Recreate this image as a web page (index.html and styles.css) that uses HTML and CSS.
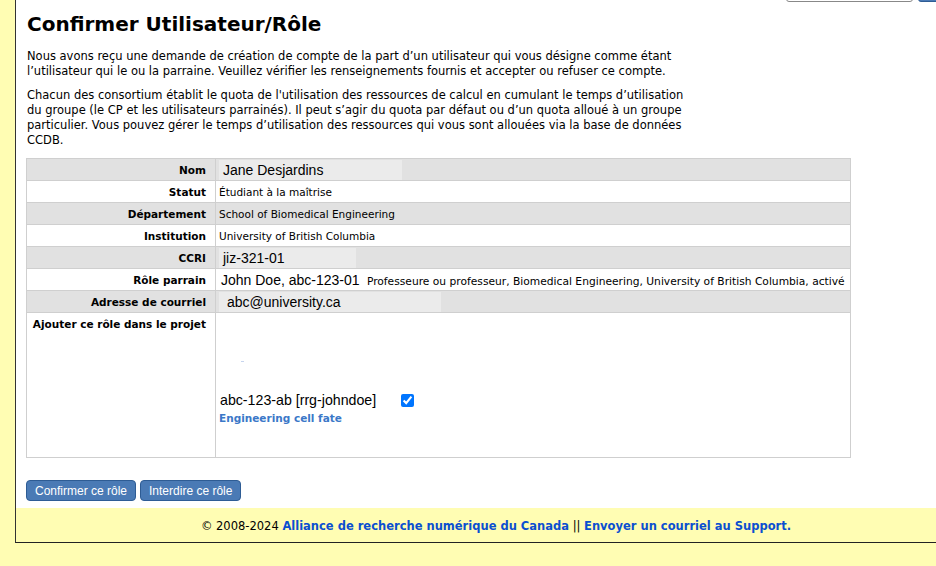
FILE: index.html
```html
<!DOCTYPE html>
<html lang="fr">
<head>
  <meta charset="UTF-8" />
  <meta name="viewport" content="width=device-width, initial-scale=1.0" />
  <title>Confirmer Utilisateur/Rôle</title>
  <link rel="stylesheet" href="styles.css">
</head>
<body>
  <div class="page">
    <div class="topbar">
      <input class="search" type="text" />
      <button class="search-go"></button>
    </div>

    <div class="content">
      <h1>Confirmer Utilisateur/Rôle</h1>
      <p>Nous avons reçu une demande de création de compte de la part d’un utilisateur qui vous désigne comme étant l’utilisateur qui le ou la parraine. Veuillez vérifier les renseignements fournis et accepter ou refuser ce compte.</p>
      <p>Chacun des consortium établit le quota de l'utilisation des ressources de calcul en cumulant le temps d’utilisation du groupe (le CP et les utilisateurs parrainés). Il peut s’agir du quota par défaut ou d’un quota alloué à un groupe particulier. Vous pouvez gérer le temps d’utilisation des ressources qui vous sont allouées via la base de données CCDB.</p>

      <table class="details">
        <tr class="odd">
          <th>Nom</th>
          <td><span class="field" style="width:183px">Jane Desjardins</span></td>
        </tr>
        <tr>
          <th>Statut</th>
          <td>Étudiant à la maîtrise</td>
        </tr>
        <tr class="odd">
          <th>Département</th>
          <td>School of Biomedical Engineering</td>
        </tr>
        <tr>
          <th>Institution</th>
          <td>University of British Columbia</td>
        </tr>
        <tr class="odd">
          <th>CCRI</th>
          <td><span class="field" style="width:137px">jiz-321-01</span></td>
        </tr>
        <tr>
          <th>Rôle parrain</th>
          <td><span class="big">John Doe, abc-123-01</span> <span class="note">Professeure ou professeur, Biomedical Engineering, University of British Columbia, activé</span></td>
        </tr>
        <tr class="odd">
          <th>Adresse de courriel</th>
          <td><span class="field wide" style="width:222px">abc@university.ca</span></td>
        </tr>
        <tr class="project-row">
          <th>Ajouter ce rôle dans le projet</th>
          <td>
            <div class="spacer"><span class="dot"></span></div>
            <div class="project">
              <span class="big">abc-123-ab [rrg-johndoe]</span>
              <input type="checkbox" checked />
            </div>
            <div class="project-name">Engineering cell fate</div>
          </td>
        </tr>
      </table>

      <div class="actions">
        <button class="btn">Confirmer ce rôle</button>
        <button class="btn">Interdire ce rôle</button>
      </div>
    </div>

    <div class="footer">
      © 2008-2024 <a href="#">Alliance de recherche numérique du Canada</a> || <a href="#">Envoyer un courriel au Support.</a>
    </div>
  </div>
</body>
</html>
```

FILE: styles.css
```css
* {
  box-sizing: border-box;
}

html, body {
  overflow: hidden;
}

body {
  margin: 0;
  background: #fffdb3;
  font-family: 'DejaVu Sans', Verdana, sans-serif;
  color: #000;
}

.page {
  margin-left: 15px;
  width: 961px;
  background: #fff;
  border-left: 1px solid #333;
  border-bottom: 1px solid #222;
}

.topbar {
  display: flex;
  justify-content: flex-end;
  gap: 5px;
  height: 2px;
  margin-right: 24px;
}

.search {
  margin-top: -20px;
  width: 127px;
  height: 22px;
  border: 1px solid #888;
  border-radius: 3px;
  background: #fff;
}

.search-go {
  margin-top: -20px;
  width: 34px;
  height: 22px;
  border: 1px solid #2e5c94;
  border-radius: 3px;
  background: #4a7ab5;
}

.content {
  padding: 0 10px;
}

h1 {
  font-size: 20px;
  line-height: 24px;
  margin: 10px 0 13px 1px;
}

p {
  font-size: 11.5px;
  line-height: 15px;
  margin: 0 0 9px 1px;
  width: 668px;
}

.details {
  width: 825px;
  border-collapse: collapse;
  margin-top: 10px;
  border: 1px solid #cfcfcf;
}

.details th,
.details td {
  border: 1px solid #cfcfcf;
  height: 22px;
  padding: 0 3px;
  font-size: 10.5px;
}

.details th {
  width: 189px;
  text-align: right;
  padding-right: 9px;
  font-weight: bold;
}

.details td {
  padding-left: 3px;
}

.details tr.odd {
  background: #e1e1e1;
}

.field {
  display: inline-block;
  height: 20px;
  line-height: 20px;
  background: #ebebeb;
  font-family: 'Liberation Sans', Arial, sans-serif;
  font-size: 14px;
  padding-left: 4px;
  vertical-align: middle;
}

.field.wide {
  padding-left: 8px;
}

.big {
  font-family: 'Liberation Sans', Arial, sans-serif;
  font-size: 14px;
  padding-left: 2px;
}

.note {
  font-size: 10.7px;
  padding-left: 4px;
}

.project-row th,
.project-row td {
  vertical-align: top;
  height: 145px;
}

.project-row th {
  padding-top: 5px;
  padding-left: 0;
}

.spacer {
  height: 78px;
  position: relative;
}

.dot {
  position: absolute;
  left: 22px;
  top: 48px;
  width: 3px;
  height: 1px;
  background: #c6d4ee;
}

.project {
  display: flex;
  align-items: center;
  height: 18px;
}

.project .big {
  padding-left: 1px;
  font-size: 14.2px;
}

.project input {
  margin: 0 0 0 25px;
  width: 13px;
  height: 13px;
}

.project-name {
  font-weight: bold;
  color: #3b78c8;
  font-size: 10.5px;
  margin-top: 3px;
}

.actions {
  display: flex;
  gap: 4px;
  margin-top: 22px;
  padding-bottom: 7px;
}

.btn {
  height: 21px;
  padding: 0 8px;
  font-family: 'Liberation Sans', Arial, sans-serif;
  font-size: 12px;
  color: #fff;
  background: #4a7ab5;
  border: 1px solid #2e5c94;
  border-radius: 4px;
}

.footer {
  background: #fffdb3;
  height: 34px;
  line-height: 36px;
  text-align: center;
  font-size: 11.5px;
}

.footer a {
  color: #0b4fd0;
  font-weight: bold;
  text-decoration: none;
}
```
